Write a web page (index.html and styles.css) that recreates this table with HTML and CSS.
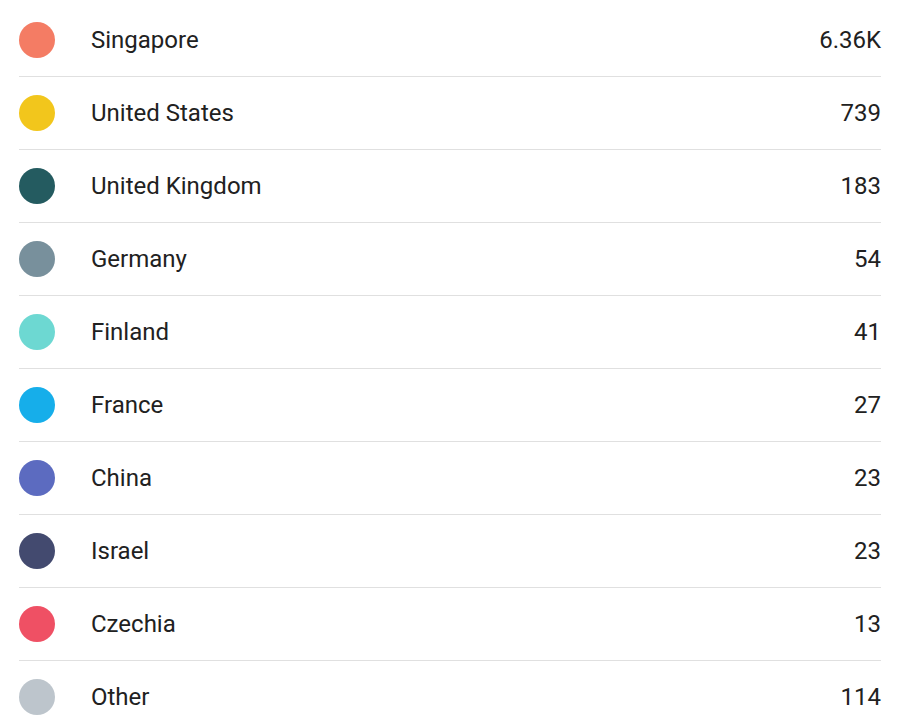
FILE: index.html
```html
<!DOCTYPE html>
<html>
<head>
<meta charset="utf-8">
<link rel="stylesheet" href="styles.css">
</head>
<body>
<ul class="list">
  <li class="row"><span class="dot c1"></span><span class="name">Singapore</span><span class="val">6.36K</span></li>
  <li class="row"><span class="dot c2"></span><span class="name">United States</span><span class="val">739</span></li>
  <li class="row"><span class="dot c3"></span><span class="name">United Kingdom</span><span class="val">183</span></li>
  <li class="row"><span class="dot c4"></span><span class="name">Germany</span><span class="val">54</span></li>
  <li class="row"><span class="dot c5"></span><span class="name">Finland</span><span class="val">41</span></li>
  <li class="row"><span class="dot c6"></span><span class="name">France</span><span class="val">27</span></li>
  <li class="row"><span class="dot c7"></span><span class="name">China</span><span class="val">23</span></li>
  <li class="row"><span class="dot c8"></span><span class="name">Israel</span><span class="val">23</span></li>
  <li class="row"><span class="dot c9"></span><span class="name">Czechia</span><span class="val">13</span></li>
  <li class="row"><span class="dot c10"></span><span class="name">Other</span><span class="val">114</span></li>
</ul>
</body>
</html>
```
FILE: styles.css
```css
html, body {
  margin: 0;
  padding: 0;
  background: #ffffff;
}
body {
  font-family: Roboto, "Liberation Sans", sans-serif;
  color: #212121;
}
.list {
  list-style: none;
  margin: 0;
  padding: 4px 29px 0 19px;
}
.row {
  display: flex;
  align-items: center;
  height: 72px;
  border-bottom: 1px solid #e0e0e0;
  font-size: 24px;
}
.row:last-child {
  border-bottom: none;
}
.dot {
  width: 36px;
  height: 36px;
  border-radius: 50%;
  flex: none;
  margin-right: 36px;
}
.name {
  flex: 1;
}
.val {
  text-align: right;
}
.c1 { background: #f47c64; }
.c2 { background: #f2c61c; }
.c3 { background: #245b60; }
.c4 { background: #78909c; }
.c5 { background: #6dd8d2; }
.c6 { background: #16aeea; }
.c7 { background: #5c6bc0; }
.c8 { background: #434a6f; }
.c9 { background: #ef5064; }
.c10 { background: #bdc5cc; }
```
